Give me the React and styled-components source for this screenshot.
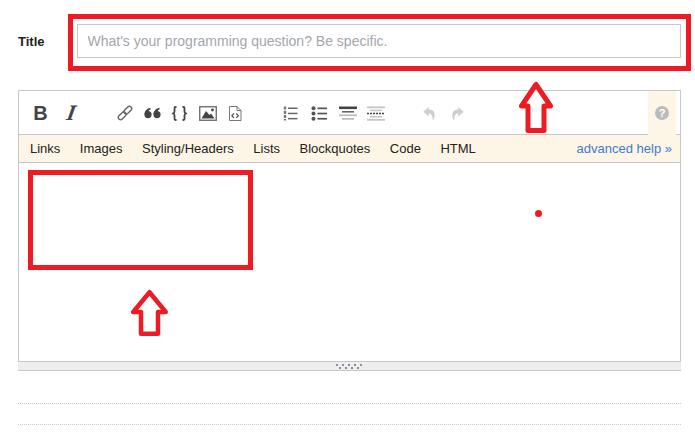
import React from "react";
import styled, { createGlobalStyle } from "styled-components";

const Global = createGlobalStyle`
  html, body { margin: 0; padding: 0; background: #fff; }
  body { font-family: "Liberation Sans", Arial, sans-serif; overflow: hidden; }
  * { box-sizing: border-box; }
`;

const Page = styled.div`
  position: relative;
  width: 695px;
  height: 435px;
  padding: 24px 14px 0 18px;
  overflow: hidden;
`;
const TitleRow = styled.div`
  display: flex;
  align-items: center;
  height: 34px;
`;
const TitleLabel = styled.label`
  width: 59px;
  font-size: 13px;
  font-weight: 700;
  color: #222;
`;
const TitleInput = styled.input`
  flex: 1;
  height: 34px;
  border: 1px solid #c8c8cc;
  padding: 0 9.5px;
  font: 14px "Liberation Sans", Arial, sans-serif;
  outline: none;
  &::placeholder { color: #a4a6ad; opacity: 1; }
`;
const Editor = styled.div`
  margin-top: 32px;
  border: 1px solid #c8c8cc;
  border-bottom: 0;
  height: 281px;
  display: flex;
  flex-direction: column;
`;
const Toolbar = styled.div`
  display: flex;
  align-items: stretch;
  height: 44px;
  border-bottom: 1px solid #c8c8cc;
  flex: none;
`;
const ToolGroup = styled.div`
  display: flex;
  margin-left: ${(p) => p.$ml}px;
`;
const ToolButton = styled.div`
  width: ${(p) => p.$w}px;
  display: flex;
  align-items: center;
  justify-content: center;
  padding-top: 1px;
`;
const BoldGlyph = styled.span`
  font: 700 20px "Liberation Sans", Arial, sans-serif;
  color: #444;
`;
const ItalicGlyph = styled.span`
  display: inline-block;
  font: italic 700 22px "Liberation Serif", "Times New Roman", serif;
  color: #444;
  transform: skewX(-10deg);
`;
const HelpCell = styled.div`
  margin-left: auto;
  margin-right: 4px;
  margin-bottom: -1px;
  width: 28px;
  background: #fdf6e6;
  position: relative;
  display: flex;
  align-items: center;
  justify-content: center;
`;
const HelpBar = styled.div`
  display: flex;
  align-items: center;
  gap: 19.5px;
  height: 28px;
  flex: none;
  padding: 0 8px 0 11px;
  background: #fdf6e6;
  border-bottom: 1px solid #c8c8cc;
  font-size: 13px;
  color: #222;
`;
const HelpLink = styled.span`
  white-space: nowrap;
`;
const AdvancedLink = styled.a`
  margin-left: auto;
  color: #3d7bd0;
  font-size: 13px;
`;
const TextArea = styled.div`
  flex: 1;
  background: #fff;
`;
const Grip = styled.div`
  height: 10px;
  margin: 0 -1px;
  background: #eeeef0;
  border-top: 1px solid #c8c8cc;
  border-bottom: 1px solid #c8c8cc;
  display: flex;
  justify-content: center;
  align-items: center;
`;
const Rule = styled.div`
  border-top: 1px dotted #c8c8cc;
  margin-top: ${(p) => p.$mt}px;
`;
const Overlay = styled.div`
  position: absolute;
  left: ${(p) => p.$x}px;
  top: ${(p) => p.$y}px;
  width: ${(p) => p.$w}px;
  height: ${(p) => p.$h}px;
  border: ${(p) => p.$b}px solid #ed1c24;
  border-radius: ${(p) => p.$r || 0}px;
  background: ${(p) => p.$fill || "transparent"};
`;
const ArrowSvg = styled.svg`
  position: absolute;
  left: ${(p) => p.$x}px;
  top: ${(p) => p.$y}px;
`;

const Ic = ({ w = 18, h = 16, children }) => (
  <svg width={w} height={h} viewBox={`0 0 ${w} ${h}`}>{children}</svg>
);

const LinkIcon = () => (
  <Ic w={16} h={16}>
    <g fill="none" stroke="#666" strokeWidth="1.4" transform="rotate(-45 8 8)">
      <rect x="-0.5" y="5.7" width="9" height="4.6" rx="2.3" />
      <rect x="7.5" y="5.7" width="9" height="4.6" rx="2.3" />
    </g>
  </Ic>
);
const QuoteIcon = () => (
  <Ic w={17} h={12}>
    <g fill="#444">
      <circle cx="4" cy="7.6" r="3.6" />
      <path d="M.5 7C.8 3.5 3 1.2 6.5.8V2.6C4.8 3.2 4 4.6 4 6.5Z" />
      <circle cx="13" cy="7.6" r="3.6" />
      <path d="M9.5 7C9.8 3.5 12 1.2 15.5.8V2.6C13.8 3.2 13 4.6 13 6.5Z" />
    </g>
  </Ic>
);
const BracesIcon = () => (
  <Ic w={15} h={15}>
    <g fill="none" stroke="#444" strokeWidth="1.8">
      <path d="M4.5 1H3.6C2.8 1 2.5 1.5 2.5 2.2V5.8C2.5 6.7 2 7.2 1 7.5 2 7.8 2.5 8.3 2.5 9.2V12.8C2.5 13.5 2.8 14 3.6 14H4.5" />
      <path d="M10.5 1H11.4C12.2 1 12.5 1.5 12.5 2.2V5.8C12.5 6.7 13 7.2 14 7.5 13 7.8 12.5 8.3 12.5 9.2V12.8C12.5 13.5 12.2 14 11.4 14H10.5" />
    </g>
  </Ic>
);
const ImageIcon = () => (
  <Ic w={18} h={15}>
    <rect x=".75" y=".75" width="16.5" height="13.5" fill="#fff" stroke="#666" strokeWidth="1.3" />
    <path d="M2.5 12.5 7 5 10.5 9 12 7.5 15.5 12.5Z" fill="#444" />
    <circle cx="13.5" cy="4" r="1.4" fill="#444" />
  </Ic>
);
const CodeFileIcon = () => (
  <Ic w={14} h={15}>
    <path d="M1.5.5H9L13 4.5V14.5H1.5Z" fill="#fff" stroke="#777" />
    <path d="M9 .5V4.5H13" fill="none" stroke="#777" />
    <path d="M6 7.5 3.8 9.7 6 11.9M8.2 7.5 10.4 9.7 8.2 11.9" fill="none" stroke="#444" strokeWidth="1.1" />
  </Ic>
);
const OlIcon = () => (
  <Ic w={15} h={15}>
    <path d="M2 .5V14.5" stroke="#777" strokeWidth="2.4" strokeDasharray="3 1.2 3.2 1 3 1" />
    <g fill="#666">
      <rect x="5" y="1.5" width="9.5" height="1.5" />
      <rect x="5" y="6.7" width="9.5" height="1.5" />
      <rect x="5" y="11.9" width="9.5" height="1.5" />
    </g>
  </Ic>
);
const UlIcon = () => (
  <Ic w={16} h={15}>
    <g fill="#555">
      <circle cx="2.5" cy="2.3" r="2" />
      <circle cx="2.5" cy="7.5" r="2" />
      <circle cx="2.5" cy="12.7" r="2" />
      <rect x="6.5" y="1.5" width="9.5" height="1.7" />
      <rect x="6.5" y="6.7" width="9.5" height="1.7" />
      <rect x="6.5" y="11.9" width="9.5" height="1.7" />
    </g>
  </Ic>
);
const HeadingIcon = () => (
  <Ic w={18} h={15}>
    <rect x="0" y=".5" width="18" height="2.6" fill="#444" />
    <rect x="3" y="5" width="12" height="1.6" fill="#666" />
    <rect x="0" y="8.4" width="18" height="1.7" fill="#bbb" />
    <rect x="3" y="12" width="12" height="1.7" fill="#bbb" />
  </Ic>
);
const HrIcon = () => (
  <Ic w={18} h={15}>
    <rect x="0" y=".5" width="18" height="1.7" fill="#c4c4c4" />
    <rect x="3" y="3.7" width="12" height="1.5" fill="#c4c4c4" />
    <path d="M0 7.5H18" stroke="#444" strokeWidth="1.6" strokeDasharray="2 1" />
    <rect x="3" y="10" width="12" height="1.5" fill="#c4c4c4" />
    <rect x="0" y="13" width="18" height="1.7" fill="#c4c4c4" />
  </Ic>
);
const UndoIcon = ({ flip }) => (
  <Ic w={13} h={15}>
    <path
      d="M5.8 1 .3 5.8 5.8 10.6V7.4C8 7.4 9.4 9 10 14.8 13 9.5 12.4 3.4 5.8 3.4Z"
      fill="#cfcfcf"
      transform={flip ? "translate(13 0) scale(-1 1)" : undefined}
    />
  </Ic>
);
const HelpIcon = () => (
  <svg width="14" height="14" viewBox="0 0 14 14">
    <circle cx="7" cy="7" r="7" fill="#bbb" />
    <text x="7" y="11" textAnchor="middle" fontFamily="Liberation Sans, Arial, sans-serif" fontWeight="700" fontSize="11" fill="#fff">?</text>
  </svg>
);
const GripDots = () => (
  <svg width="27" height="5" viewBox="0 0 27 5">
    <g fill="#8f8f96">
      {[0, 6, 12, 18, 24].map((x) => <rect key={x} x={x} y="0" width="2" height="2" />)}
      {[3, 9, 15, 21].map((x) => <rect key={x} x={x} y="3" width="2" height="2" />)}
    </g>
  </svg>
);
const Arrow = ({ x, y, w, h, wingY, sl, sr, sw }) => (
  <ArrowSvg $x={x} $y={y} width={w} height={h} viewBox={`0 0 ${w} ${h}`}>
    <path
      d={`M${w / 2} ${sw / 2 + 1} L${sw / 2} ${wingY} H${sl} V${h - sw / 2} H${sr} V${wingY} H${w - sw / 2} Z`}
      fill="#fff"
      stroke="#ed1c24"
      strokeWidth={sw}
      strokeLinejoin="round"
    />
  </ArrowSvg>
);

const links = ["Links", "Images", "Styling/Headers", "Lists", "Blockquotes", "Code", "HTML"];

export default function App() {
  return (
    <Page>
      <Global />
      <TitleRow>
        <TitleLabel>Title</TitleLabel>
        <TitleInput placeholder="What's your programming question? Be specific." />
      </TitleRow>
      <Editor>
        <Toolbar>
          <ToolGroup $ml={6}>
            <ToolButton $w={31}><BoldGlyph>B</BoldGlyph></ToolButton>
            <ToolButton $w={31}><ItalicGlyph>I</ItalicGlyph></ToolButton>
          </ToolGroup>
          <ToolGroup $ml={24}>
            <ToolButton $w={27.6}><LinkIcon /></ToolButton>
            <ToolButton $w={27.6}><QuoteIcon /></ToolButton>
            <ToolButton $w={27.6}><BracesIcon /></ToolButton>
            <ToolButton $w={27.6}><ImageIcon /></ToolButton>
            <ToolButton $w={27.6}><CodeFileIcon /></ToolButton>
          </ToolGroup>
          <ToolGroup $ml={27.5}>
            <ToolButton $w={28.5}><OlIcon /></ToolButton>
            <ToolButton $w={28.5}><UlIcon /></ToolButton>
            <ToolButton $w={28.5}><HeadingIcon /></ToolButton>
            <ToolButton $w={28.5}><HrIcon /></ToolButton>
          </ToolGroup>
          <ToolGroup $ml={25.5}>
            <ToolButton $w={27.5}><UndoIcon /></ToolButton>
            <ToolButton $w={27.5}><UndoIcon flip /></ToolButton>
          </ToolGroup>
          <HelpCell><HelpIcon /></HelpCell>
        </Toolbar>
        <HelpBar>
          {links.map((l) => <HelpLink key={l}>{l}</HelpLink>)}
          <AdvancedLink>advanced help »</AdvancedLink>
        </HelpBar>
        <TextArea />
        <Grip><GripDots /></Grip>
      </Editor>
      <Rule $mt={32} />
      <Rule $mt={20} />

      <Overlay $x={68} $y={14} $w={623} $h={57} $b={5} />
      <Overlay $x={28} $y={170} $w={225} $h={100} $b={5} />
      <Overlay $x={535} $y={210} $w={7} $h={7} $b={0} $r={4} $fill="#ed1c24" />
      <Arrow x={519} y={81} w={34} h={52} wingY={25} sl={9} sr={25} sw={5} />
      <Arrow x={131} y={289} w={37} h={47} wingY={23} sl={10} sr={27} sw={4.5} />
    </Page>
  );
}
